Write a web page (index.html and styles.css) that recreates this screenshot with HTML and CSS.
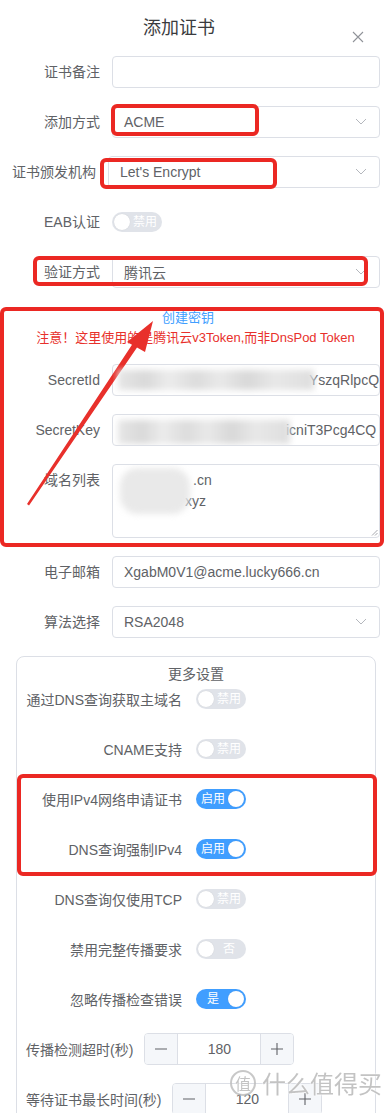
FILE: index.html
```html
<!DOCTYPE html>
<html lang="zh-CN">
<head>
<meta charset="utf-8">
<title>添加证书</title>
<link rel="stylesheet" href="styles.css">
</head>
<body>
<div class="dialog">
  <header class="dlg-head">
    <h1 class="dlg-title">添加证书</h1>
    <span class="dlg-close"><svg viewBox="0 0 12 12" width="12" height="12"><path d="M1 1L11 11M11 1L1 11" stroke="#909399" stroke-width="1.1" fill="none"/></svg></span>
  </header>

  <div class="form">
    <div class="row"><span class="lbl">证书备注</span><div class="field"></div></div>

    <div class="row">
      <span class="lbl">添加方式</span>
      <div class="field select"><span>ACME</span><svg class="chev" viewBox="0 0 12 8" width="12" height="8"><path d="M1 1l5 5 5-5" fill="none" stroke="#b4b7bd" stroke-width="1"/></svg></div>
      <span class="mark mark-method"></span>
    </div>

    <div class="row">
      <span class="lbl lbl-wide">证书颁发机构</span>
      <div class="field select"><span>Let's Encrypt</span><svg class="chev" viewBox="0 0 12 8" width="12" height="8"><path d="M1 1l5 5 5-5" fill="none" stroke="#b4b7bd" stroke-width="1"/></svg></div>
      <span class="mark mark-ca"></span>
    </div>

    <div class="row">
      <span class="lbl">EAB认证</span>
      <span class="sw"><span class="knob"></span><span class="sw-txt">禁用</span></span>
    </div>

    <div class="row">
      <span class="lbl">验证方式</span>
      <div class="field select"><span>腾讯云</span><svg class="chev" viewBox="0 0 12 8" width="12" height="8"><path d="M1 1l5 5 5-5" fill="none" stroke="#b4b7bd" stroke-width="1"/></svg></div>
      <span class="mark mark-verify"></span>
    </div>

    <div class="keyzone">
      <div class="link">创建密钥</div>
      <div class="note">注意！这里使用的是腾讯云v3Token,而非DnsPod Token</div>

      <div class="row">
        <span class="lbl">SecretId</span>
        <div class="field secret"><span class="blur blur-id"></span><span class="secret-txt">YszqRlpcQ8</span></div>
      </div>

      <div class="row">
        <span class="lbl">SecretKey</span>
        <div class="field secret"><span class="blur blur-key"></span><span class="secret-txt">icniT3Pcg4CQ</span></div>
      </div>

      <div class="row row-area">
        <span class="lbl">域名列表</span>
        <div class="field area">
          <span class="line line-1">.cn</span>
          <span class="line line-2">xyz</span>
          <span class="blob"></span>
          <svg class="grip" viewBox="0 0 7 7" width="7" height="7"><path d="M6.5 1L1 6.5M6.5 4L4 6.5" stroke="#909399" stroke-width="0.8" fill="none"/></svg>
        </div>
      </div>

      <span class="mark mark-zone"></span>
      <svg class="arrow" viewBox="0 0 220 210" width="220" height="210">
        <polygon points="153,15 145,46 137,41.6 29,199.5 27,198 132,38.8 127,36" fill="#e8302b"/>
      </svg>
    </div>

    <div class="row"><span class="lbl">电子邮箱</span><div class="field"><span>XgabM0V1@acme.lucky666.cn</span></div></div>

    <div class="row">
      <span class="lbl">算法选择</span>
      <div class="field select"><span>RSA2048</span><svg class="chev" viewBox="0 0 12 8" width="12" height="8"><path d="M1 1l5 5 5-5" fill="none" stroke="#b4b7bd" stroke-width="1"/></svg></div>
    </div>

    <div class="more">
      <div class="more-title">更多设置</div>

      <div class="prow"><span class="plbl">通过DNS查询获取主域名</span><span class="sw"><span class="knob"></span><span class="sw-txt">禁用</span></span></div>
      <div class="prow"><span class="plbl">CNAME支持</span><span class="sw"><span class="knob"></span><span class="sw-txt">禁用</span></span></div>

      <div class="pgroup">
        <div class="prow"><span class="plbl">使用IPv4网络申请证书</span><span class="sw sw-on"><span class="sw-txt">启用</span><span class="knob"></span></span></div>
        <div class="prow"><span class="plbl">DNS查询强制IPv4</span><span class="sw sw-on"><span class="sw-txt">启用</span><span class="knob"></span></span></div>
        <span class="mark mark-group"></span>
      </div>

      <div class="prow"><span class="plbl">DNS查询仅使用TCP</span><span class="sw"><span class="knob"></span><span class="sw-txt">禁用</span></span></div>
      <div class="prow"><span class="plbl">禁用完整传播要求</span><span class="sw"><span class="knob"></span><span class="sw-txt">否</span></span></div>
      <div class="prow"><span class="plbl">忽略传播检查错误</span><span class="sw sw-on"><span class="sw-txt">是</span><span class="knob"></span></span></div>

      <div class="prow">
        <span class="plbl plbl-auto">传播检测超时(秒)</span>
        <div class="num">
          <span class="num-btn num-minus"><svg viewBox="0 0 14 14" width="14" height="14"><path d="M1 7h12" stroke="#606266" stroke-width="1.1"/></svg></span>
          <span class="num-val">180</span>
          <span class="num-btn num-plus"><svg viewBox="0 0 14 14" width="14" height="14"><path d="M7 1v12M1 7h12" stroke="#606266" stroke-width="1.1"/></svg></span>
        </div>
      </div>
      <div class="prow">
        <span class="plbl plbl-auto">等待证书最长时间(秒)</span>
        <div class="num">
          <span class="num-btn num-minus"><svg viewBox="0 0 14 14" width="14" height="14"><path d="M1 7h12" stroke="#606266" stroke-width="1.1"/></svg></span>
          <span class="num-val">120</span>
          <span class="num-btn num-plus"><svg viewBox="0 0 14 14" width="14" height="14"><path d="M7 1v12M1 7h12" stroke="#606266" stroke-width="1.1"/></svg></span>
        </div>
      </div>
    </div>
  </div>
</div>

<div class="watermark"><span class="wm-logo">值</span><span class="wm-text">什么值得买</span></div>
</body>
</html>
```

FILE: styles.css
```css
html, body {
  margin: 0;
  padding: 0;
  height: 1113px;
  overflow: hidden;
  background: #fff;
}

body {
  font-family: "Liberation Sans", "Noto Sans CJK SC", sans-serif;
  color: #606266;
  font-size: 14px;
}

.dialog {
  width: 388px;
}

.dlg-head {
  display: flex;
  align-items: flex-start;
  height: 56px;
}

.dlg-title {
  flex: 1;
  margin: 0;
  padding: 15px 0 0 6px;
  font-size: 18px;
  line-height: 26px;
  font-weight: 400;
  text-align: center;
  color: #3a3b3e;
}

.dlg-close {
  display: flex;
  margin: 31px 24px 0 0;
  width: 12px;
  height: 12px;
}

.form {
  padding: 0 8px 0 0;
}

.row {
  position: relative;
  display: flex;
  align-items: center;
  height: 32px;
  margin-bottom: 18px;
}

.lbl {
  flex: none;
  width: 112px;
  box-sizing: border-box;
  padding-right: 12px;
  text-align: right;
  line-height: 32px;
  white-space: nowrap;
  color: #606266;
}

.lbl-wide {
  width: 108px;
}

.field {
  flex: 1;
  min-width: 0;
  height: 32px;
  box-sizing: border-box;
  border: 1px solid #dcdfe6;
  border-radius: 4px;
  display: flex;
  align-items: center;
  padding: 0 11px;
  color: #606266;
  white-space: nowrap;
  overflow: hidden;
}

.select {
  padding-right: 12px;
}

.chev {
  margin-left: auto;
  flex: none;
}

/* switches */
.sw {
  display: inline-flex;
  align-items: center;
  width: 50px;
  height: 20px;
  box-sizing: border-box;
  padding: 0 2px;
  border-radius: 10px;
  background: #e0e3e9;
  flex: none;
}

.knob {
  width: 16px;
  height: 16px;
  border-radius: 50%;
  background: #fff;
  flex: none;
  box-shadow: 0 0 1px rgba(0, 0, 0, 0.15);
}

.sw-txt {
  flex: 1;
  text-align: center;
  font-size: 12px;
  line-height: 20px;
  color: #fff;
}

.sw-on {
  background: #409eff;
}

/* annotation frames */
.mark {
  position: absolute;
  box-sizing: border-box;
  border: 4px solid #eb2823;
  border-radius: 6px;
  pointer-events: none;
}

.mark-method { left: 111px; top: -2px; width: 148px; height: 32px; }
.mark-ca { left: 100px; top: 2px; width: 177px; height: 31px; }
.mark-verify { left: 33px; top: 0; width: 335px; height: 30px; }

/* key zone */
.keyzone {
  position: relative;
  padding-top: 2px;
}

.mark-zone {
  left: 0;
  top: 1px;
  width: 384px;
  height: 240px;
}

.arrow {
  position: absolute;
  left: 0;
  top: 0;
}

.link {
  text-align: center;
  padding-right: 4px;
  font-size: 13px;
  line-height: 20px;
  color: #409eff;
}

.note {
  text-align: center;
  padding-left: 11px;
  font-size: 13px;
  line-height: 20px;
  color: #e8302b;
  margin-bottom: 16px;
  white-space: nowrap;
}

.secret {
  padding: 0 0 0 5px;
}

.blur {
  position: relative;
  z-index: 1;
  display: inline-block;
  flex: none;
  height: 20px;
  background: linear-gradient(90deg, #e6e6e6, #d9d9d9 14%, #ececec 26%, #dcdcdc 40%, #e9e9e9 52%, #d8d8d8 66%, #e8e8e8 80%, #dedede);
  filter: blur(3px);
}

.blur-id {
  width: 196px;
  margin-right: -5px;
}

.blur-key {
  width: 172px;
  height: 24px;
  margin-right: -4px;
  margin-top: 4px;
}

.secret-txt {
  flex: none;
}

.row-area {
  height: 74px;
  align-items: flex-start;
}

.area {
  position: relative;
  height: 74px;
  display: block;
  padding: 5px 11px;
  line-height: 21px;
}

.line {
  display: block;
}

.line-1 { padding-left: 69px; }
.line-2 { padding-left: 61px; }

.blob {
  position: absolute;
  left: 7px;
  top: 3px;
  width: 70px;
  height: 46px;
  border-radius: 18px;
  background: #e9e9e9;
  filter: blur(3px);
}

.grip {
  position: absolute;
  right: 1px;
  bottom: 1px;
}

/* more settings */
.more {
  margin: 0 4px 0 16px;
  border: 1px solid #dcdfe6;
  border-radius: 8px;
  padding-top: 8px;
}

.more-title {
  text-align: center;
  line-height: 18px;
  color: #606266;
}

.prow {
  display: flex;
  align-items: center;
  height: 32px;
  margin-bottom: 18px;
}

.plbl {
  flex: none;
  width: 165px;
  margin-right: 14px;
  text-align: right;
  white-space: nowrap;
  color: #606266;
}

.plbl-auto {
  width: auto;
  margin-left: 9px;
  margin-right: 11px;
  text-align: left;
}

.pgroup {
  position: relative;
}

.mark-group {
  left: 0;
  right: -2px;
  top: -9px;
  height: 102px;
}

.num {
  display: flex;
  width: 150px;
  height: 32px;
  box-sizing: border-box;
  border: 1px solid #dcdfe6;
  border-radius: 4px;
  overflow: hidden;
  flex: none;
}

.num-btn {
  width: 32px;
  flex: none;
  display: flex;
  align-items: center;
  justify-content: center;
  background: #f5f7fa;
}

.num-minus { border-right: 1px solid #dcdfe6; }
.num-plus { border-left: 1px solid #dcdfe6; }

.num-val {
  flex: 1;
  text-align: center;
  line-height: 30px;
  color: #606266;
}

/* watermark */
.watermark {
  position: fixed;
  right: 6px;
  top: 1068px;
  display: flex;
  align-items: center;
  gap: 6px;
  color: rgba(185, 185, 185, 0.85);
  text-shadow: 0 0 2px #fff, 0 0 2px #fff;
  font-family: "Noto Sans CJK SC", sans-serif;
}

.wm-logo {
  width: 26px;
  height: 26px;
  box-sizing: border-box;
  border: 2px solid rgba(190, 190, 190, 0.85);
  border-radius: 50%;
  font-size: 16px;
  line-height: 22px;
  text-align: center;
}

.wm-text {
  font-size: 24px;
  line-height: 30px;
  letter-spacing: 0;
}
```
